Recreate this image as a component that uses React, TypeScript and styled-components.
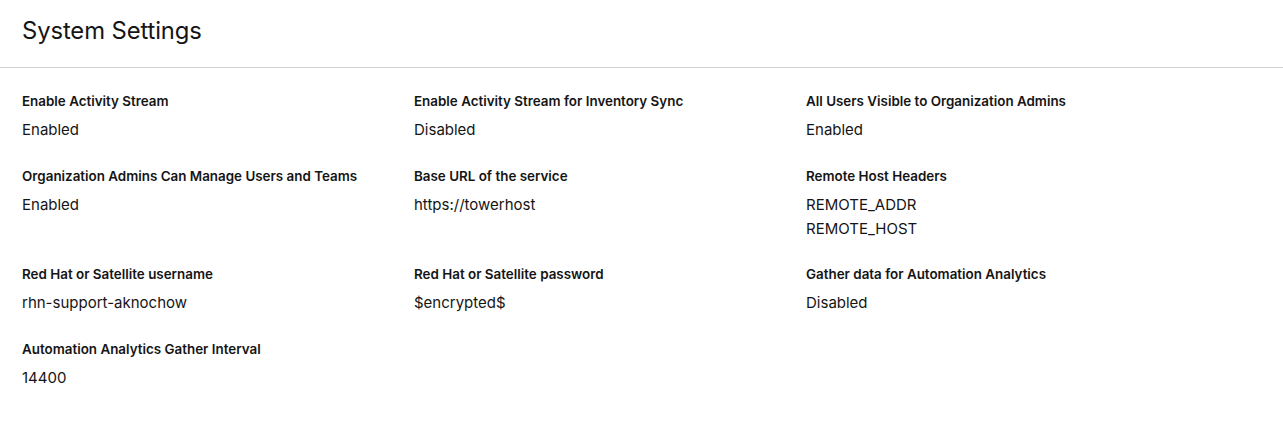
import React from "react";
import styled, { createGlobalStyle } from "styled-components";

const GlobalStyle = createGlobalStyle`
  body {
    margin: 0;
    background: #fff;
    color: #151515;
    font-family: "Inter", "Noto Sans", sans-serif;
  }
`;

type Setting = { label: string; value: string[] };

const settings: Setting[] = [
  { label: "Enable Activity Stream", value: ["Enabled"] },
  { label: "Enable Activity Stream for Inventory Sync", value: ["Disabled"] },
  { label: "All Users Visible to Organization Admins", value: ["Enabled"] },
  { label: "Organization Admins Can Manage Users and Teams", value: ["Enabled"] },
  { label: "Base URL of the service", value: ["https://towerhost"] },
  { label: "Remote Host Headers", value: ["REMOTE_ADDR", "REMOTE_HOST"] },
  { label: "Red Hat or Satellite username", value: ["rhn-support-aknochow"] },
  { label: "Red Hat or Satellite password", value: ["$encrypted$"] },
  { label: "Gather data for Automation Analytics", value: ["Disabled"] },
  { label: "Automation Analytics Gather Interval", value: ["14400"] },
];

function App() {
  return (
    <>
      <GlobalStyle />
      <StyledPage>
        <StyledHeader>
          <StyledTitle>System Settings</StyledTitle>
        </StyledHeader>
        <StyledList>
          {settings.map((el) => (
            <StyledGroup key={el.label}>
              <StyledTerm>{el.label}</StyledTerm>
              <StyledDescription>
                {el.value.map((line) => (
                  <div key={line}>{line}</div>
                ))}
              </StyledDescription>
            </StyledGroup>
          ))}
        </StyledList>
      </StyledPage>
    </>
  );
}

export default App;

const StyledPage = styled.div`
  width: 1283px;
  height: 443px;
  background: #fff;
`;

const StyledHeader = styled.div`
  padding: 16px 22px 22px;
  border-bottom: 1px solid #d2d2d2;
`;

const StyledTitle = styled.h1`
  margin: 0;
  font-size: 23.8px;
  font-weight: 400;
  line-height: 29px;
  letter-spacing: -0.1px;
`;

const StyledList = styled.dl`
  margin: 0;
  padding: 23px 22px;
  display: grid;
  grid-template-columns: repeat(3, 368px);
  column-gap: 24px;
  row-gap: 23.6px;
  align-items: start;
`;

const StyledGroup = styled.div`
  display: flex;
  flex-direction: column;
  gap: 6px;
`;

const StyledTerm = styled.dt`
  font-size: 13.4px;
  font-weight: 600;
  line-height: 21px;
`;

const StyledDescription = styled.dd`
  margin: 0;
  font-size: 15px;
  line-height: 24px;
`;
